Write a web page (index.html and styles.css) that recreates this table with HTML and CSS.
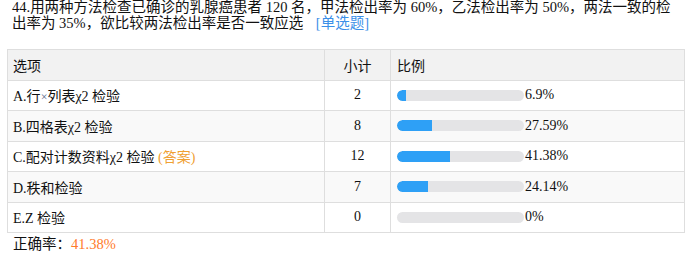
FILE: index.html
```html
<!DOCTYPE html>
<html lang="zh">
<head>
<meta charset="utf-8">
<link rel="stylesheet" href="styles.css">
</head>
<body>
<div class="page">
  <div class="question">44.用两种方法检查已确诊的乳腺癌患者 120 名，甲法检出率为 60%，乙法检出率为 50%，两法一致的检出率为 35%，欲比较两法检出率是否一致应选 <span class="type">[单选题]</span></div>
  <table class="stats">
    <thead>
      <tr><th class="c-opt">选项</th><th class="c-num">小计</th><th class="c-bar">比例</th></tr>
    </thead>
    <tbody>
      <tr><td class="c-opt">A.行<span class="times">×</span>列表χ2 检验</td><td class="c-num">2</td><td class="c-bar"><div class="ratio"><div class="track"><div class="fill" style="width:6.9%"></div></div><span class="pct">6.9%</span></div></td></tr>
      <tr class="alt"><td class="c-opt">B.四格表χ2 检验</td><td class="c-num">8</td><td class="c-bar"><div class="ratio"><div class="track"><div class="fill" style="width:27.59%"></div></div><span class="pct">27.59%</span></div></td></tr>
      <tr><td class="c-opt">C.配对计数资料χ2 检验 <span class="answer">(答案)</span></td><td class="c-num">12</td><td class="c-bar"><div class="ratio"><div class="track"><div class="fill" style="width:41.38%"></div></div><span class="pct">41.38%</span></div></td></tr>
      <tr class="alt"><td class="c-opt">D.秩和检验</td><td class="c-num">7</td><td class="c-bar"><div class="ratio"><div class="track"><div class="fill" style="width:24.14%"></div></div><span class="pct">24.14%</span></div></td></tr>
      <tr><td class="c-opt">E.Z 检验</td><td class="c-num">0</td><td class="c-bar"><div class="ratio"><div class="track"><div class="fill" style="width:0%"></div></div><span class="pct">0%</span></div></td></tr>
    </tbody>
  </table>
  <div class="accuracy">正确率：<span class="rate">41.38%</span></div>
</div>
</body>
</html>
```
FILE: styles.css
```css
html, body {
  margin: 0;
  padding: 0;
  background: #ffffff;
}
body {
  font-family: "Liberation Serif", "Noto Sans CJK SC", serif;
  font-size: 14px;
  color: #111111;
}
.page {
  padding: 0 7px;
}
.question {
  padding-left: 5px;
  font-size: 14.5px;
  line-height: 16px;
  margin-top: -1px;
}
.type {
  color: #3b8fe8;
  margin-left: 9px;
}
.stats {
  margin-top: 18px;
  width: 678px;
  border-collapse: collapse;
  table-layout: fixed;
}
.stats th, .stats td {
  border: 1px solid #dedede;
  height: 29.5px;
  padding: 0 5px;
  font-weight: normal;
  text-align: left;
  vertical-align: middle;
  white-space: nowrap;
}
.stats thead th {
  background: #f2f2f2;
}
.stats tr.alt td {
  background: #f9f9f9;
}
.c-opt { width: 306px; }
.c-num { width: 55px; }
.stats .c-num { text-align: center; }
.stats .c-bar { padding-left: 6px; }
.times {
  color: #5a6a8a;
  font-size: 12px;
}
.answer {
  color: #f0a032;
}
.ratio {
  display: flex;
  align-items: center;
}
.track {
  width: 127px;
  height: 11px;
  border-radius: 6px;
  background: #e4e4e6;
  overflow: hidden;
}
.fill {
  height: 100%;
  background: #2ea0f6;
  border-radius: 6px 0 0 6px;
}
.pct {
  margin-left: 1px;
}
.accuracy {
  padding-left: 6px;
  font-size: 14.5px;
  line-height: 18px;
  margin-top: 2px;
}
.rate {
  color: #ff7a2a;
}
```
